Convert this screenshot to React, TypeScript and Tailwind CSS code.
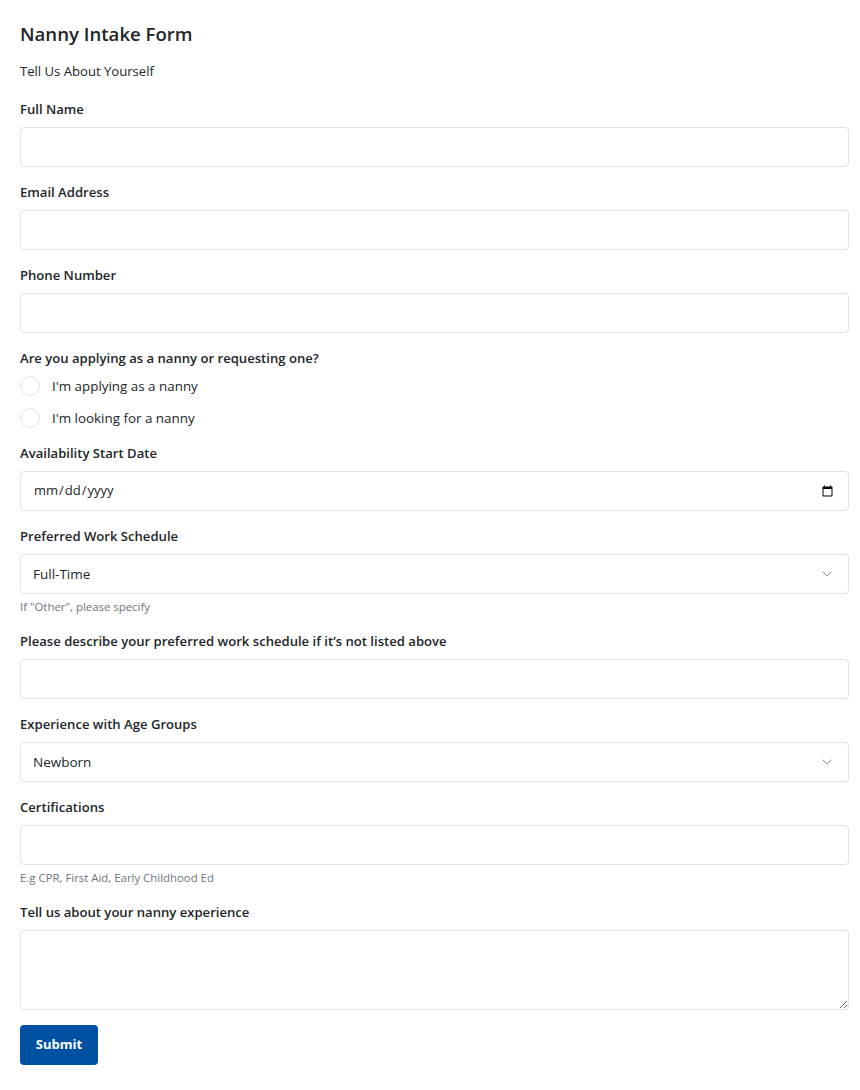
import { ChevronDown } from "lucide-react";

const inputCls =
  "block w-full h-10 px-3 rounded-[4px] border border-[#dee2e6] bg-white text-[13.5px] text-[#212529] outline-none focus:border-[#86b7fe]";

function Label({ children }: { children: React.ReactNode }) {
  return <label className="block text-[13.1px] leading-5 font-semibold text-[#212529] mb-2">{children}</label>;
}

function Help({ children }: { children: React.ReactNode }) {
  return <div className="mt-[5px] text-[11.4px] leading-4 text-[#6c757d]">{children}</div>;
}

function Select({ options }: { options: string[] }) {
  return (
    <div className="relative">
      <select className={inputCls + " appearance-none pr-10"}>
        {options.map((o) => (
          <option key={o}>{o}</option>
        ))}
      </select>
      <ChevronDown className="absolute right-[14px] top-1/2 -translate-y-1/2 w-4 h-4 text-[#8a8f94] pointer-events-none" strokeWidth={1.5} />
    </div>
  );
}

export default function App() {
  return (
    <div className="min-h-screen bg-white font-['Open_Sans',sans-serif] text-[#212529]">
      <form className="pl-5 pr-[11px] pt-[22px] pb-6" onSubmit={(e) => e.preventDefault()}>
        <h1 className="text-[18.6px] leading-6 font-semibold text-[#212529]">Nanny Intake Form</h1>
        <p className="mt-[15px] mb-[18px] text-[13.1px] leading-5">Tell Us About Yourself</p>

        <div className="mb-[15px]">
          <Label>Full Name</Label>
          <input type="text" className={inputCls} />
        </div>
        <div className="mb-[15px]">
          <Label>Email Address</Label>
          <input type="email" className={inputCls} />
        </div>
        <div className="mb-[15px]">
          <Label>Phone Number</Label>
          <input type="tel" className={inputCls} />
        </div>

        <div className="mb-[9px]">
          <div className="text-[13.1px] leading-5 font-semibold mb-[2px]">Are you applying as a nanny or requesting one?</div>
          {["I'm applying as a nanny", "I'm looking for a nanny"].map((t) => (
            <label key={t} className="flex items-center gap-3 h-8 text-[13.4px] cursor-pointer">
              <input type="radio" name="role" className="appearance-none w-5 h-5 rounded-full border border-[#dee2e6] bg-white checked:border-[5px] checked:border-[#0051a2]" />
              <span>{t}</span>
            </label>
          ))}
        </div>

        <div className="mb-[15px]">
          <Label>Availability Start Date</Label>
          <input type="date" className={inputCls + " text-[13px]"} />
        </div>

        <div className="mb-[16px]">
          <Label>Preferred Work Schedule</Label>
          <Select options={["Full-Time", "Part-Time", "Weekends", "Other"]} />
          <Help>If "Other", please specify</Help>
        </div>

        <div className="mb-[15px]">
          <Label>Please describe your preferred work schedule if it’s not listed above</Label>
          <input type="text" className={inputCls} />
        </div>

        <div className="mb-[15px]">
          <Label>Experience with Age Groups</Label>
          <Select options={["Newborn", "Infant", "Toddler", "School Age"]} />
        </div>

        <div className="mb-[16px]">
          <Label>Certifications</Label>
          <input type="text" className={inputCls} />
          <Help>E.g CPR, First Aid, Early Childhood Ed</Help>
        </div>

        <div className="mb-[15px]">
          <Label>Tell us about your nanny experience</Label>
          <textarea className="block w-full h-20 px-3 py-2 rounded-[4px] border border-[#dee2e6] bg-white text-[13.5px] outline-none" />
        </div>

        <button type="submit" className="h-10 w-[78px] rounded-[4px] bg-[#0051a2] text-white text-[13px] font-bold">
          Submit
        </button>
      </form>
    </div>
  );
}
